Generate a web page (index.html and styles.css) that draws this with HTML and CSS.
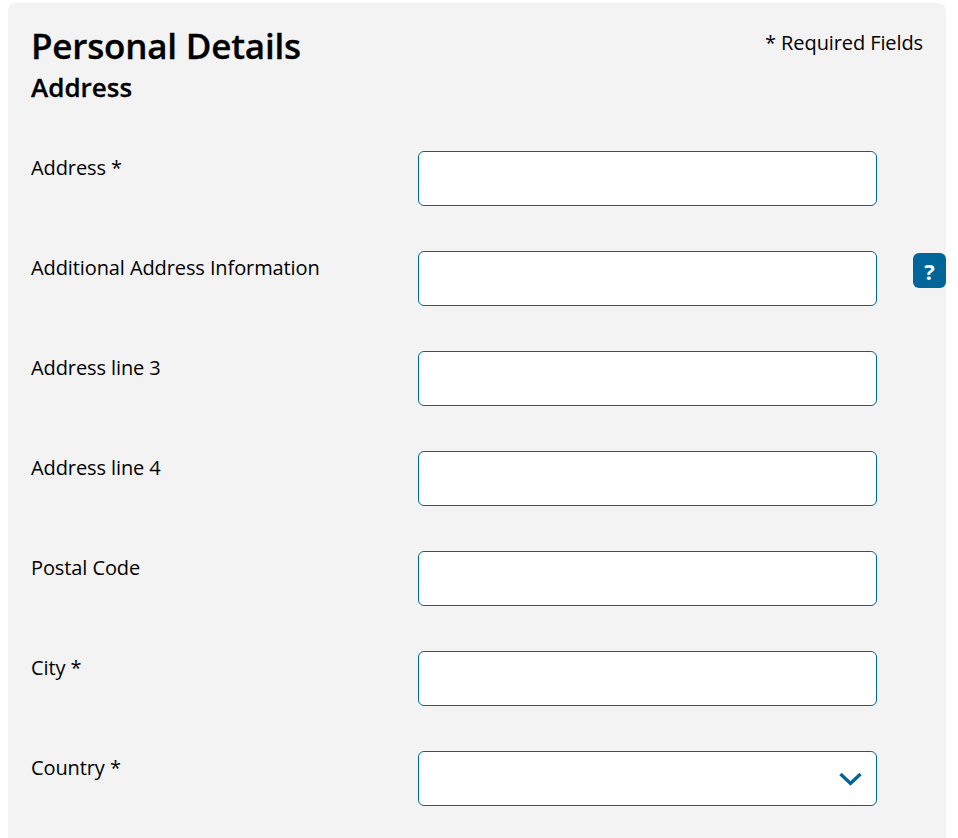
FILE: index.html
```html
<!DOCTYPE html>
<html lang="en">
<head>
	<meta charset="UTF-8">
	<meta name="viewport" content="width=device-width, initial-scale=1.0">
	<title>Personal Details</title>
	<link rel="stylesheet" href="styles.css">
</head>
<body>
	<form class="panel">
		<div class="panel-head">
			<div>
				<h1 class="title">Personal Details</h1>
				<h2 class="subtitle">Address</h2>
			</div>
			<p class="required-note">* Required Fields</p>
		</div>

		<div class="field">
			<label class="field-label" for="address1">Address *</label>
			<input class="field-input" type="text" id="address1">
		</div>
		<div class="field">
			<label class="field-label" for="address2">Additional Address Information</label>
			<input class="field-input" type="text" id="address2">
			<button class="help-btn" type="button">?</button>
		</div>
		<div class="field">
			<label class="field-label" for="address3">Address line 3</label>
			<input class="field-input" type="text" id="address3">
		</div>
		<div class="field">
			<label class="field-label" for="address4">Address line 4</label>
			<input class="field-input" type="text" id="address4">
		</div>
		<div class="field">
			<label class="field-label" for="postal">Postal Code</label>
			<input class="field-input" type="text" id="postal">
		</div>
		<div class="field">
			<label class="field-label" for="city">City *</label>
			<input class="field-input" type="text" id="city">
		</div>
		<div class="field">
			<label class="field-label" for="country">Country *</label>
			<div class="select-box" id="country">
				<svg class="select-arrow" width="23" height="14" viewBox="0 0 23 14">
					<path d="M1.5 2 L11.5 11.5 L21.5 2" fill="none" stroke="#006699" stroke-width="3.4"/>
				</svg>
			</div>
		</div>
	</form>
</body>
</html>
```

FILE: styles.css
```css
* {
	padding: 0;
	margin: 0;
	box-sizing: border-box;
}

body {
	background-color: white;
	font-family: "Open Sans", "Noto Sans", sans-serif;
	font-size: 20px;
	letter-spacing: -0.1px;
	color: black;
}

.panel {
	width: 938px;
	margin: 3px 0 0 8px;
	padding: 0 0 32px 23px;
	background-color: #f3f3f3;
	border-radius: 8px 8px 0 0;
}

.panel-head {
	display: flex;
	justify-content: space-between;
	align-items: flex-start;
	padding-top: 20px;
	padding-right: 23px;
	margin-bottom: 46px;
}

.title {
	font-size: 35px;
	line-height: 46px;
	font-weight: 600;
	letter-spacing: -0.2px;
	-webkit-text-stroke: 0.3px black;
}

.subtitle {
	font-size: 26px;
	line-height: 36px;
	font-weight: 600;
	letter-spacing: 0;
	-webkit-text-stroke: 0.3px black;
}

.required-note {
	line-height: 40px;
}

.field {
	display: grid;
	grid-template-columns: 351px 459px 33px;
	column-gap: 36px;
	align-items: start;
	margin-bottom: 45px;
}

.field:last-child {
	margin-bottom: 0;
}

.field-label {
	line-height: 34px;
}

.field-input,
.select-box {
	display: block;
	width: 459px;
	height: 55px;
	background-color: white;
	border: 1px solid #006699;
	border-radius: 6px;
}

.select-box {
	display: flex;
	align-items: center;
	justify-content: flex-end;
	padding-right: 14px;
}

.select-arrow {
	display: block;
}

.help-btn {
	width: 33px;
	height: 35px;
	margin-top: 2px;
	background-color: #006699;
	color: white;
	border: none;
	border-radius: 6px;
	font-family: inherit;
	font-size: 22px;
	font-weight: 700;
}
```
